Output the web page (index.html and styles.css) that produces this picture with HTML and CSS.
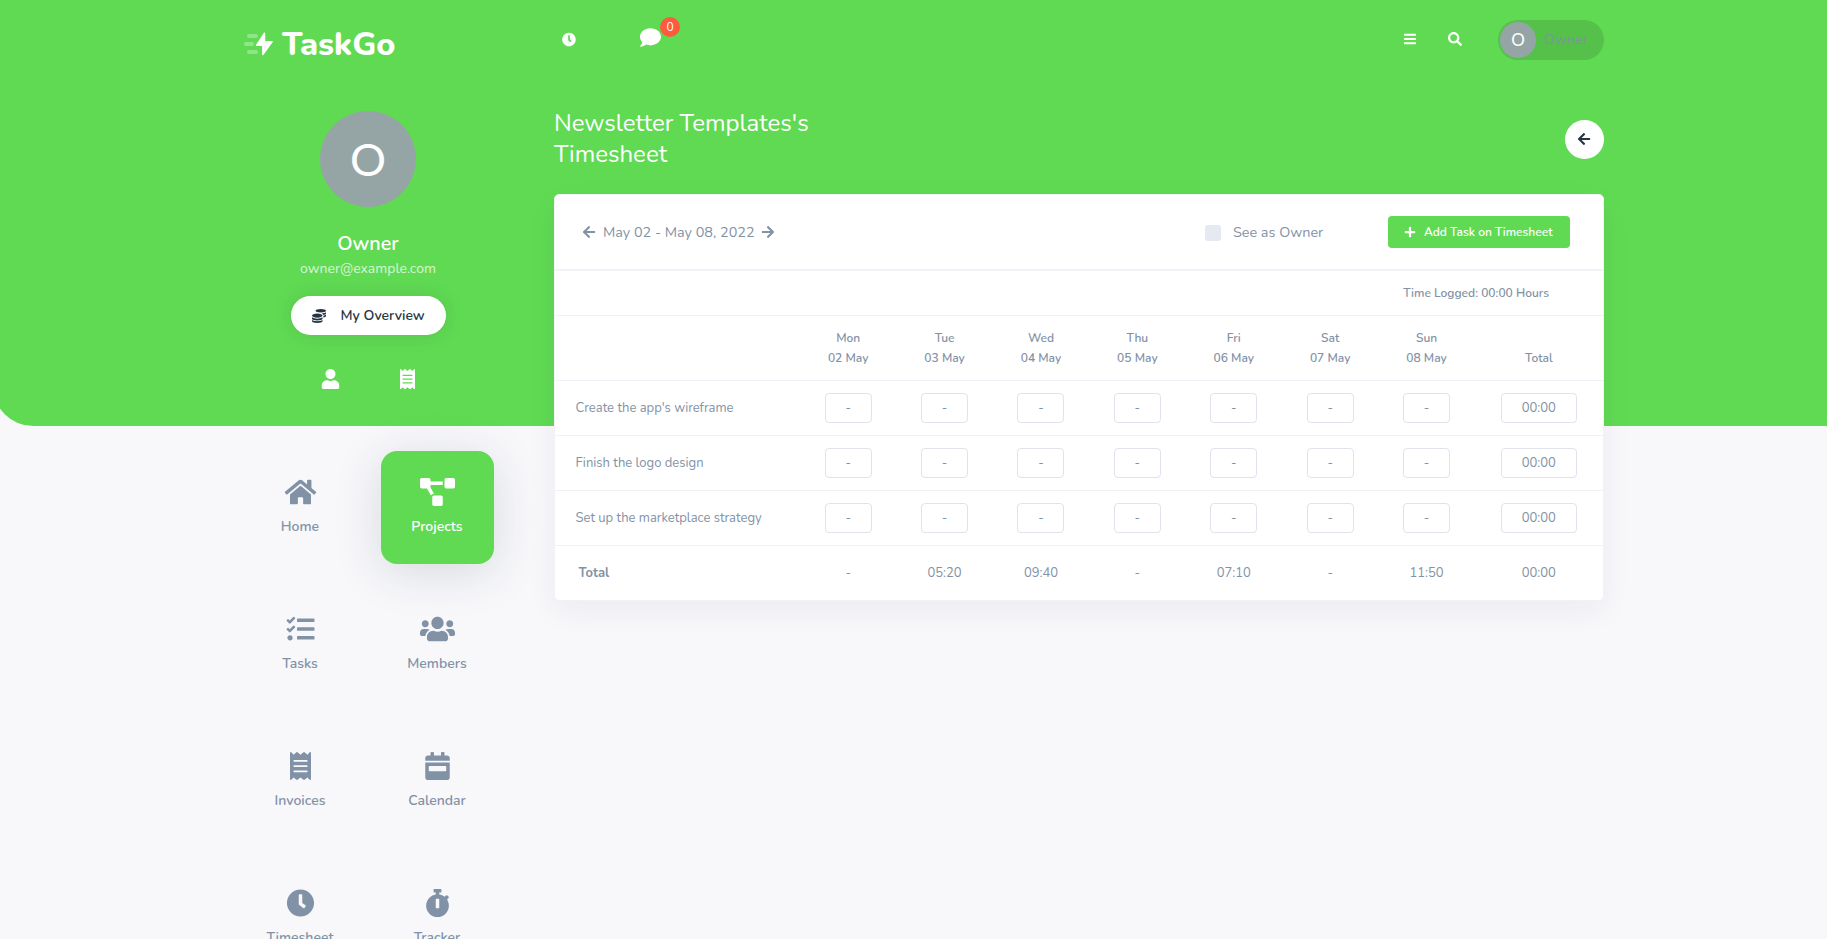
FILE: index.html
```html
<!DOCTYPE html>
<html lang="en">
<head>
<meta charset="utf-8">
<title>TaskGo - Timesheet</title>
<link rel="stylesheet" href="styles.css">
</head>
<body>
<svg class="sprite" aria-hidden="true">
  <symbol id="home" viewBox="0 0 576 512"><path d="M280.37 148.26L96 300.11V464a16 16 0 0 0 16 16l112.06-.29a16 16 0 0 0 15.92-16V368a16 16 0 0 1 16-16h64a16 16 0 0 1 16 16v95.64a16 16 0 0 0 16 16.05L464 480a16 16 0 0 0 16-16V300L295.67 148.26a12.19 12.19 0 0 0-15.3 0zM571.6 251.47L488 182.56V44.05a12 12 0 0 0-12-12h-56a12 12 0 0 0-12 12v72.61L318.47 43a48 48 0 0 0-61 0L4.34 251.47a12 12 0 0 0-1.6 16.9l25.5 31A12 12 0 0 0 45.15 301l235.22-193.74a12.19 12.19 0 0 1 15.3 0L530.9 301a12 12 0 0 0 16.9-1.6l25.5-31a12 12 0 0 0-1.7-16.93z"/></symbol>
  <symbol id="projects" viewBox="0 0 640 512"><path d="M384 320H256c-17.67 0-32 14.33-32 32v128c0 17.67 14.33 32 32 32h128c17.67 0 32-14.33 32-32V352c0-17.67-14.33-32-32-32zM192 32c0-17.67-14.33-32-32-32H32C14.33 0 0 14.33 0 32v128c0 17.67 14.33 32 32 32h95.72l73.16 128.04C211.98 300.98 232.4 288 256 288h.28L192 175.51V128h224V64H192V32zM608 0H480c-17.67 0-32 14.33-32 32v128c0 17.67 14.33 32 32 32h128c17.67 0 32-14.33 32-32V32c0-17.67-14.33-32-32-32z"/></symbol>
  <symbol id="tasks" viewBox="0 0 512 512"><path d="M139.61 35.5a12 12 0 0 0-17 0L58.93 98.81l-22.7-22.12a12 12 0 0 0-17 0L3.53 92.41a12 12 0 0 0 0 17l47.59 47.4a12.78 12.78 0 0 0 17.61 0l15.59-15.62L156.52 69a12.09 12.09 0 0 0 .09-17zm0 159.19a12 12 0 0 0-17 0l-63.68 63.72-22.7-22.1a12 12 0 0 0-17 0L3.53 252a12 12 0 0 0 0 17L51 316.5a12.77 12.77 0 0 0 17.6 0l15.7-15.69 72.2-72.22a12 12 0 0 0 .09-16.9zM64 368c-26.49 0-48.59 21.5-48.59 48S37.53 464 64 464a48 48 0 0 0 0-96zm432 16H208a16 16 0 0 0-16 16v32a16 16 0 0 0 16 16h288a16 16 0 0 0 16-16v-32a16 16 0 0 0-16-16zm0-320H208a16 16 0 0 0-16 16v32a16 16 0 0 0 16 16h288a16 16 0 0 0 16-16V80a16 16 0 0 0-16-16zm0 160H208a16 16 0 0 0-16 16v32a16 16 0 0 0 16 16h288a16 16 0 0 0 16-16v-32a16 16 0 0 0-16-16z"/></symbol>
  <symbol id="users" viewBox="0 0 640 512"><path d="M96 224c35.3 0 64-28.7 64-64s-28.7-64-64-64-64 28.7-64 64 28.7 64 64 64zm448 0c35.3 0 64-28.7 64-64s-28.7-64-64-64-64 28.7-64 64 28.7 64 64 64zm32 32h-64c-17.6 0-33.5 7.1-45.1 18.6 40.3 22.1 68.9 62 75.1 109.4h66c17.7 0 32-14.3 32-32v-32c0-35.3-28.7-64-64-64zm-256 0c61.9 0 112-50.1 112-112S381.9 32 320 32 208 82.1 208 144s50.1 112 112 112zm76.8 32h-8.3c-20.8 10-43.9 16-68.5 16s-47.6-6-68.5-16h-8.3C179.6 288 128 339.6 128 403.2V432c0 26.5 21.5 48 48 48h288c26.5 0 48-21.5 48-48v-28.8c0-63.6-51.6-115.2-115.2-115.2zm-223.7-13.4C161.5 263.1 145.6 256 128 256H64c-35.3 0-64 28.7-64 64v32c0 17.7 14.3 32 32 32h65.9c6.3-47.4 34.9-87.3 75.2-109.4z"/></symbol>
  <symbol id="receipt" viewBox="0 0 384 512"><path d="M358.4 3.2L320 48 265.6 3.2a15.9 15.9 0 0 0-19.2 0L192 48 137.6 3.2a15.9 15.9 0 0 0-19.2 0L64 48 25.6 3.2C15-4.7 0 2.8 0 16v480c0 13.2 15 20.7 25.6 12.8L64 464l54.4 44.8a15.9 15.9 0 0 0 19.2 0L192 464l54.4 44.8a15.9 15.9 0 0 0 19.2 0L320 464l38.4 44.8c10.5 7.9 25.6.4 25.6-12.8V16c0-13.2-15-20.7-25.6-12.8zM320 360c0 4.4-3.6 8-8 8H72c-4.4 0-8-3.6-8-8v-16c0-4.4 3.6-8 8-8h240c4.4 0 8 3.6 8 8v16zm0-96c0 4.4-3.6 8-8 8H72c-4.4 0-8-3.6-8-8v-16c0-4.4 3.6-8 8-8h240c4.4 0 8 3.6 8 8v16zm0-96c0 4.4-3.6 8-8 8H72c-4.4 0-8-3.6-8-8v-16c0-4.4 3.6-8 8-8h240c4.4 0 8 3.6 8 8v16z"/></symbol>
  <symbol id="calendar" viewBox="0 0 448 512"><path d="M0 464c0 26.500 21.500 48 48 48h352c26.500 0 48-21.500 48-48V192H0v272zm64-192c0-8.800 7.200-16 16-16h288c8.800 0 16 7.200 16 16v64c0 8.800-7.200 16-16 16H80c-8.800 0-16-7.200-16-16v-64zM400 64h-48V16c0-8.800-7.200-16-16-16h-32c-8.800 0-16 7.200-16 16v48H160V16c0-8.800-7.200-16-16-16h-32c-8.800 0-16 7.200-16 16v48H48C21.500 64 0 85.500 0 112v48h448v-48c0-26.500-21.500-48-48-48z"/></symbol>
  <symbol id="clock" viewBox="0 0 512 512"><path d="M256,8C119,8,8,119,8,256S119,504,256,504,504,393,504,256,393,8,256,8Zm92.49,313h0l-20,25a16,16,0,0,1-22.49,2.5h0l-67-49.72a40,40,0,0,1-15-31.23V112a16,16,0,0,1,16-16h32a16,16,0,0,1,16,16V256l58,42.5A16,16,0,0,1,348.49,321Z"/></symbol>
  <symbol id="stopwatch" viewBox="0 0 448 512"><path d="M432 304c0 114.900-93.100 208-208 208S16 418.900 16 304c0-104 76.300-190.200 176-205.500V64h-28c-6.600 0-12-5.400-12-12V12c0-6.600 5.400-12 12-12h120c6.600 0 12 5.400 12 12v40c0 6.600-5.400 12-12 12h-28v34.500c37.500 5.800 71.700 21.600 99.700 44.600l27.500-27.500c4.700-4.700 12.300-4.700 17 0l28.300 28.300c4.700 4.700 4.700 12.300 0 17l-29.400 29.400-.6.6C419.700 223.300 432 262.200 432 304zm-176 36V188.500c0-6.600-5.400-12-12-12h-40c-6.600 0-12 5.400-12 12V340c0 6.600 5.400 12 12 12h40c6.600 0 12-5.400 12-12z"/></symbol>
  <symbol id="comment" viewBox="0 0 512 512"><path d="M256 32C114.600 32 0 125.100 0 240c0 49.600 21.400 95 57 130.700C44.500 421.100 2.700 466 2.200 466.500c-2.200 2.300-2.800 5.700-1.500 8.700S4.800 480 8 480c66.300 0 116-31.800 140.600-51.400 32.700 12.300 69 19.400 107.400 19.400 141.400 0 256-93.100 256-208S397.400 32 256 32z"/></symbol>
  <symbol id="bars" viewBox="0 0 448 512"><path d="M16 132h416c8.800 0 16-7.200 16-16V76c0-8.800-7.200-16-16-16H16C7.200 60 0 67.200 0 76v40c0 8.800 7.200 16 16 16zm0 160h416c8.800 0 16-7.200 16-16v-40c0-8.800-7.200-16-16-16H16c-8.800 0-16 7.200-16 16v40c0 8.800 7.200 16 16 16zm0 160h416c8.800 0 16-7.200 16-16v-40c0-8.800-7.200-16-16-16H16c-8.800 0-16 7.200-16 16v40c0 8.800 7.200 16 16 16z"/></symbol>
  <symbol id="search" viewBox="0 0 512 512"><path d="M505 442.700L405.300 343c-4.500-4.500-10.600-7-17-7H372c27.600-35.300 44-79.700 44-128C416 93.100 322.900 0 208 0S0 93.100 0 208s93.100 208 208 208c48.300 0 92.700-16.400 128-44v16.300c0 6.400 2.500 12.500 7 17l99.700 99.700c9.400 9.400 24.600 9.400 33.900 0l28.300-28.300c9.400-9.400 9.400-24.600.1-34zM208 336c-70.700 0-128-57.200-128-128 0-70.700 57.200-128 128-128 70.700 0 128 57.200 128 128 0 70.700-57.200 128-128 128z"/></symbol>
  <symbol id="user" viewBox="0 0 448 512"><path d="M224 256c70.700 0 128-57.300 128-128S294.700 0 224 0 96 57.300 96 128s57.300 128 128 128zm89.600 32h-16.700c-22.200 10.200-46.900 16-72.900 16s-50.600-5.800-72.900-16h-16.700C60.200 288 0 348.200 0 422.400V464c0 26.500 21.500 48 48 48h352c26.500 0 48-21.500 48-48v-41.600c0-74.200-60.200-134.400-134.400-134.400z"/></symbol>
  <symbol id="coins" viewBox="0 0 512 512"><path d="M0 405.300V448c0 35.300 86 64 192 64s192-28.700 192-64v-42.700C342.700 434.400 267.200 448 192 448S41.300 434.400 0 405.300zM320 128c106 0 192-28.700 192-64S426 0 320 0 128 28.700 128 64s86 64 192 64zM0 300.400V352c0 35.300 86 64 192 64s192-28.700 192-64v-51.600c-41.300 34-116.900 51.600-192 51.600S41.300 334.400 0 300.400zm416 11c57.300-11.100 96-31.700 96-55.400v-42.700c-23.200 16.400-57.300 27.600-96 34.500v63.600zM192 160C86 160 0 195.800 0 240s86 80 192 80 192-35.800 192-80-86-80-192-80zm219.300 56.300c60-10.800 100.700-32 100.700-56.300v-42.700c-35.500 25.100-96.500 38.600-160.700 41.800 29.500 14.300 51.200 33.500 60 57.200z"/></symbol>
  <symbol id="arrow" viewBox="0 0 448 512"><path d="M257.500 445.100l-22.200 22.200c-9.400 9.400-24.600 9.400-33.900 0L7 273c-9.400-9.400-9.400-24.600 0-33.900L201.400 44.700c9.400-9.400 24.600-9.400 33.900 0l22.200 22.200c9.500 9.500 9.300 25-.4 34.300L136.600 216H424c13.300 0 24 10.700 24 24v32c0 13.300-10.700 24-24 24H136.600l120.500 114.800c9.800 9.300 10 24.800.4 34.300z"/></symbol>
  <symbol id="plus" viewBox="0 0 448 512"><path d="M416 208H272V64c0-17.670-14.330-32-32-32h-32c-17.670 0-32 14.330-32 32v144H32c-17.670 0-32 14.330-32 32v32c0 17.670 14.330 32 32 32h144v144c0 17.670 14.330 32 32 32h32c17.670 0 32-14.330 32-32V304h144c17.670 0 32-14.330 32-32v-32c0-17.670-14.330-32-32-32z"/></symbol>
</svg>
<div class="backdrop"></div>
<div class="page">
  <aside class="sidebar">
    <div class="brand">
      <svg class="brand-mark" viewBox="0 0 30 24"><g fill="#fff" fill-opacity=".3"><rect x="3" y="2" width="11" height="4" rx="2"/><rect x="0" y="10" width="10" height="4" rx="2"/><rect x="3" y="18" width="11" height="4" rx="2"/></g><path fill="#fff" stroke="#fff" stroke-width="1.400" stroke-linejoin="round" d="M20.500 1.200L12.500 13.300H18.800L18.800 22.500L28.200 9.700H20.600z"/></svg>
      <span class="brand-name">TaskGo</span>
    </div>
    <div class="avatar">O</div>
    <div class="profile-name">Owner</div>
    <div class="profile-mail">owner@example.com</div>
    <a class="overview"><svg class="i14"><use href="#coins"/></svg><span>My Overview</span></a>
    <div class="quick"><svg class="quick-icon"><use href="#user"/></svg><svg class="quick-icon"><use href="#receipt"/></svg></div>
    <nav class="tiles">
      <a class="tile"><svg><use href="#home"/></svg><span>Home</span></a>
      <a class="tile active"><svg><use href="#projects"/></svg><span>Projects</span></a>
      <a class="tile"><svg><use href="#tasks"/></svg><span>Tasks</span></a>
      <a class="tile"><svg><use href="#users"/></svg><span>Members</span></a>
      <a class="tile"><svg><use href="#receipt"/></svg><span>Invoices</span></a>
      <a class="tile"><svg><use href="#calendar"/></svg><span>Calendar</span></a>
      <a class="tile"><svg><use href="#clock"/></svg><span>Timesheet</span></a>
      <a class="tile"><svg><use href="#stopwatch"/></svg><span>Tracker</span></a>
    </nav>
  </aside>
  <main class="main">
    <div class="topbar">
      <svg class="top-clock"><use href="#clock"/></svg>
      <span class="chat"><svg class="top-chat"><use href="#comment"/></svg><span class="badge">0</span></span>
      <svg class="top-bars"><use href="#bars"/></svg>
      <svg class="top-search"><use href="#search"/></svg>
      <div class="account"><span class="account-avatar">O</span><span>Owner</span></div>
    </div>
    <div class="heading">
      <h1>Newsletter Templates's<br>Timesheet</h1>
      <a class="back"><svg class="i14"><use href="#arrow"/></svg></a>
    </div>
    <section class="card">
      <div class="toolbar">
        <svg class="i14"><use href="#arrow"/></svg>
        <span class="range">May 02 - May 08, 2022</span>
        <svg class="i14 flip"><use href="#arrow"/></svg>
        <span class="checkbox"></span>
        <span class="see">See as Owner</span>
        <a class="add"><svg class="i12"><use href="#plus"/></svg><span>Add Task on Timesheet</span></a>
      </div>
      <div class="logged">Time Logged: 00:00 Hours</div>
      <div class="row head">
        <span></span>
        <span>Mon<br>02 May</span><span>Tue<br>03 May</span><span>Wed<br>04 May</span><span>Thu<br>05 May</span><span>Fri<br>06 May</span><span>Sat<br>07 May</span><span>Sun<br>08 May</span><span class="last">Total</span>
      </div>
      <div class="row"><span class="name">Create the app's wireframe</span><span class="box">-</span><span class="box">-</span><span class="box">-</span><span class="box">-</span><span class="box">-</span><span class="box">-</span><span class="box">-</span><span class="box sum">00:00</span></div>
      <div class="row"><span class="name">Finish the logo design</span><span class="box">-</span><span class="box">-</span><span class="box">-</span><span class="box">-</span><span class="box">-</span><span class="box">-</span><span class="box">-</span><span class="box sum">00:00</span></div>
      <div class="row"><span class="name">Set up the marketplace strategy</span><span class="box">-</span><span class="box">-</span><span class="box">-</span><span class="box">-</span><span class="box">-</span><span class="box">-</span><span class="box">-</span><span class="box sum">00:00</span></div>
      <div class="row totals"><span class="name strong">Total</span><span>-</span><span>05:20</span><span>09:40</span><span>-</span><span>07:10</span><span>-</span><span>11:50</span><span class="last">00:00</span></div>
    </section>
  </main>
</div>
</body>
</html>
```
FILE: styles.css
```css
* { box-sizing: border-box; }
body { margin: 0; height: 939px; overflow: hidden; position: relative; background: #f8f8fb; color: #8292a6; font: 14px/20px "Nunito", "Open Sans", "Noto Sans", sans-serif; }
svg { fill: currentColor; flex: none; }
.sprite { display: none; }
.backdrop { position: absolute; z-index: -1; top: 0; left: -7px; right: 0; height: 426px; background: #60da53; border-bottom-left-radius: 40px; }
.page { display: flex; width: 1361px; margin-left: 243px; }
.i14 { width: 14px; height: 14px; }
.i12 { width: 12px; height: 12px; }

.sidebar { width: 250px; display: flex; flex-direction: column; align-items: center; color: #fff; }
.brand { align-self: stretch; display: flex; align-items: center; gap: 8px; height: 87px; padding-left: 1px; }
.brand-mark { width: 30px; height: 24px; }
.brand-name { font-size: 32.5px; font-weight: 800; line-height: 40px; }
.avatar { width: 96px; height: 96px; margin-top: 24px; border-radius: 50%; background: #95a5a6; font-family: "Lato", sans-serif; font-size: 45px; line-height: 96px; text-align: center; }
.profile-name { margin-top: 23px; font-size: 19.8px; line-height: 28px; font-weight: 600; }
.profile-mail { margin-top: 1px; line-height: 20px; opacity: .75; }
.overview { display: flex; align-items: center; gap: 15px; width: 155px; height: 39px; margin-top: 17px; padding-left: 21px; border-radius: 20px; background: #fff; color: #273444; font-weight: 600; box-shadow: 0 0 20px rgba(31, 45, 61, .12); }
.quick { display: flex; justify-content: center; gap: 46px; margin: 34px 0 0 2px; }
.quick-icon { width: 31px; height: 20px; }
.tiles { display: grid; grid-template-columns: 113px 113px; grid-auto-rows: 113px; gap: 24px; margin: 62px 0 0 2px; color: #8292a6; }
.tile { display: flex; flex-direction: column; align-items: center; padding: 27px 1px 0 0; border-radius: 16px; font-weight: 600; }
.tile svg { width: 35px; height: 28px; margin-bottom: 11px; }
.active { background: #60da53; color: #fff; box-shadow: 0 8px 48px rgba(31, 45, 61, .15); }

.main { flex: 1; margin-left: 61px; }
.topbar { display: flex; align-items: center; height: 80px; color: #fff; padding-left: 8px; }
.top-clock { width: 14px; height: 15px; margin-bottom: 1px; }
.chat { position: relative; margin-left: 64px; width: 21px; height: 21px; margin-bottom: 2px; }
.top-chat { display: block; width: 21px; height: 21px; margin-top: -2px; }
.badge { position: absolute; left: 20px; top: -12px; width: 20px; height: 20px; border-radius: 50%; background: #ff5a3c; font-size: 12px; line-height: 20px; text-align: center; }
.top-bars { width: 12px; height: 14px; margin: 0 0 2px auto; }
.top-search { width: 14px; height: 14px; margin: 0 0 2px 32px; }
.account { display: flex; align-items: center; gap: 8px; width: 106px; height: 40px; margin-left: 36px; padding-left: 2px; border-radius: 20px; background: rgba(30, 60, 40, .16); color: #7b959a; font-size: 14.2px; }
.account-avatar { width: 36px; height: 36px; border-radius: 50%; background: #95a5a6; color: #fff; font-family: "Lato", sans-serif; font-size: 17px; line-height: 36px; text-align: center; }
.heading { display: flex; align-items: center; justify-content: space-between; height: 62px; margin: 28px 0 24px; }
h1 { margin: 0; font-size: 24px; line-height: 31px; font-weight: 400; color: #fff; }
.back { display: flex; align-items: center; justify-content: center; width: 39px; height: 39px; padding-right: 2px; border-radius: 50%; background: #fff; color: #273444; }

.card { height: 407px; border: 1px solid #f1f2f7; border-radius: 5px; background: #fff; box-shadow: 0 10px 30px rgba(31, 30, 90, .06); }
.toolbar { display: flex; align-items: center; height: 76px; padding: 0 33px 0 27px; border-bottom: 2px solid #eff2f7; font-size: 14.4px; }
.range { width: 151px; margin: 0 7px; white-space: nowrap; }
.flip { transform: scaleX(-1); }
.checkbox { width: 16px; height: 16px; margin: 2px 12px 0 auto; border-radius: 3px; background: #e4e9f2; }
.see { width: 155px; }
.add { display: flex; align-items: center; gap: 8px; width: 182px; height: 32px; padding-left: 16px; border-radius: 4px; background: #60da53; color: #fff; font-size: 12px; font-weight: 600; }
.logged { display: flex; align-items: center; justify-content: flex-end; height: 45px; padding-right: 54px; border-bottom: 1px solid #eff2f7; font-size: 12px; font-weight: 600; }
.row { display: grid; grid-template-columns: 245px repeat(7, 96.4px) 128.2px; justify-items: center; align-items: center; height: 55px; border-bottom: 1px solid #eff2f7; font-size: 13px; }
.head { height: 65px; font-size: 12px; font-weight: 600; text-align: center; }
.head .last { align-self: end; margin-bottom: 12px; }
.name { justify-self: start; padding-left: 20.5px; white-space: nowrap; }
.strong { padding-left: 23.5px; font-weight: 700; }
.box { width: 47px; height: 30px; border: 1px solid #e0e3ec; border-radius: 4px; line-height: 28px; text-align: center; }
.sum { width: 76px; }
.totals { height: 54px; border-bottom: 0; }
```
